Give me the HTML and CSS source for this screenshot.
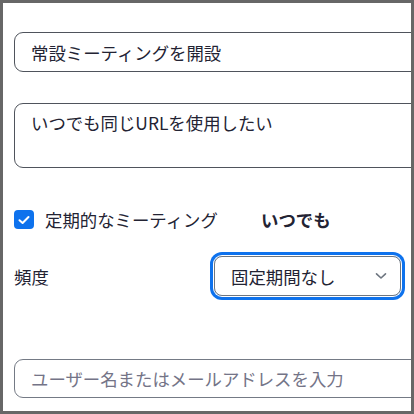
FILE: index.html
```html
<!DOCTYPE html>
<html>

<head>
  <meta charset="utf-8" />
  <title>常設ミーティング</title>
  <link rel="stylesheet" href="styles.css">
</head>

<body>
  <div class="frame">
    <input class="field" type="text" value="常設ミーティングを開設">

    <textarea class="field field-area">いつでも同じURLを使用したい</textarea>

    <div class="check-row">
      <span class="checkbox">
        <svg width="12" height="10" viewBox="0 0 12 10">
          <path d="M1.5 5.2 L4.6 8 L10.5 2" fill="none" stroke="#fff" stroke-width="2" stroke-linecap="round" stroke-linejoin="round" />
        </svg>
      </span>
      <span class="check-label">定期的なミーティング</span>
      <span class="check-value">いつでも</span>
    </div>

    <div class="freq-row">
      <span class="freq-label">頻度</span>
      <div class="select">
        <span>固定期間なし</span>
        <svg width="12" height="8" viewBox="0 0 12 8">
          <path d="M1.5 1.8 L6 6 L10.5 1.8" fill="none" stroke="#6e7680" stroke-width="1.6" stroke-linecap="round" stroke-linejoin="round" />
        </svg>
      </div>
    </div>

    <input class="field field-user" type="text" placeholder="ユーザー名またはメールアドレスを入力">
  </div>
</body>

</html>
```

FILE: styles.css
```css
* {
  margin: 0;
  padding: 0;
  box-sizing: border-box;
  font-family: "Noto Sans CJK JP", "Noto Sans", sans-serif;
}

html,
body {
  width: 100%;
  height: 100%;
  overflow: hidden;
  background-color: #666;
}

.frame {
  width: 414px;
  height: 414px;
  border: 3px solid #676767;
  background-color: #fff;
  overflow: hidden;
  padding: 29px 0 0 11px;
  color: #232333;
  font-size: 17.4px;
}

.field {
  display: block;
  width: 430px;
  height: 40px;
  border: 1px solid #4f545c;
  border-radius: 9px;
  padding: 0 16px;
  font-size: 17.4px;
  color: #232333;
  background-color: #fff;
  outline: none;
}

.field-area {
  margin-top: 31px;
  height: 65px;
  padding-top: 7px;
  line-height: 24px;
  resize: none;
}

.check-row {
  display: flex;
  align-items: center;
  margin-top: 42px;
  height: 19px;
}

.checkbox {
  width: 20px;
  height: 19px;
  border-radius: 4px;
  background-color: #0e72ed;
  display: flex;
  align-items: center;
  justify-content: center;
  flex: 0 0 auto;
}

.check-label {
  margin-left: 11px;
  width: 216px;
  flex: 0 0 auto;
}

.check-value {
  font-weight: bold;
}

.freq-row {
  display: flex;
  align-items: center;
  margin-top: 27px;
}

.freq-label {
  width: 200px;
  flex: 0 0 auto;
}

.select {
  width: 187px;
  height: 40px;
  border: 1px solid #6e7680;
  border-radius: 8px;
  box-shadow: 0 0 0 1px #fff, 0 0 0 4px #0e72ed;
  display: flex;
  align-items: center;
  justify-content: space-between;
  padding: 0 13px 0 16px;
}

.field-user {
  margin-top: 63px;
  height: 39px;
  border-color: #747a85;
}

.field-user::placeholder {
  color: #747487;
}
```
